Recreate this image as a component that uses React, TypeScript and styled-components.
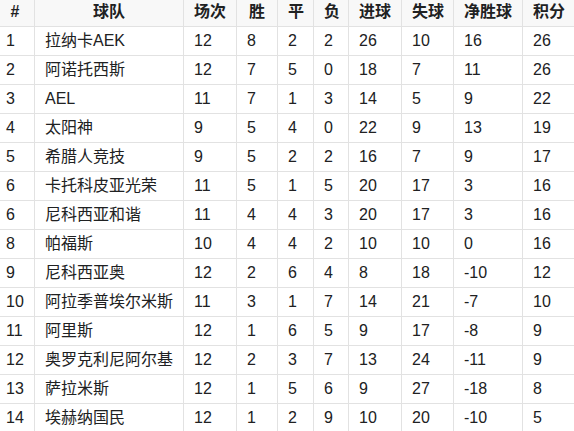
import styled, { createGlobalStyle } from 'styled-components';

const GlobalStyle = createGlobalStyle`
    body {
        margin: 0;
        background: #ffffff;
        font-family: 'Liberation Sans', Arial, 'Noto Sans CJK SC', sans-serif;
        color: #202122;
        overflow: hidden;
    }
`;

const Table = styled.table`
    width: 579px;
    margin: -3px 0 0 -5px;
    table-layout: fixed;
    border-collapse: collapse;
    font-size: 16px;
    line-height: 18px;
`;

const Col = styled.col<{ $w: number }>`
    width: ${(p) => p.$w}px;
`;

const HeadCell = styled.th`
    padding: 5px 10px;
    background: #f8f8f8;
    border: 1px solid #e2e2e2;
    font-weight: bold;
    text-align: center;
    white-space: nowrap;
`;

const Cell = styled.td`
    padding: 5px 10px;
    border: 1px solid #e2e2e2;
    text-align: left;
    white-space: nowrap;
`;

const widths = [39, 149, 53, 41, 36, 35, 53, 52, 69, 52];
const headers = ['#', '球队', '场次', '胜', '平', '负', '进球', '失球', '净胜球', '积分'];

const rows: (string | number)[][] = [
    [1, '拉纳卡AEK', 12, 8, 2, 2, 26, 10, 16, 26],
    [2, '阿诺托西斯', 12, 7, 5, 0, 18, 7, 11, 26],
    [3, 'AEL', 11, 7, 1, 3, 14, 5, 9, 22],
    [4, '太阳神', 9, 5, 4, 0, 22, 9, 13, 19],
    [5, '希腊人竞技', 9, 5, 2, 2, 16, 7, 9, 17],
    [6, '卡托科皮亚光荣', 11, 5, 1, 5, 20, 17, 3, 16],
    [6, '尼科西亚和谐', 11, 4, 4, 3, 20, 17, 3, 16],
    [8, '帕福斯', 10, 4, 4, 2, 10, 10, 0, 16],
    [9, '尼科西亚奥', 12, 2, 6, 4, 8, 18, -10, 12],
    [10, '阿拉季普埃尔米斯', 11, 3, 1, 7, 14, 21, -7, 10],
    [11, '阿里斯', 12, 1, 6, 5, 9, 17, -8, 9],
    [12, '奥罗克利尼阿尔基', 12, 2, 3, 7, 13, 24, -11, 9],
    [13, '萨拉米斯', 12, 1, 5, 6, 9, 27, -18, 8],
    [14, '埃赫纳国民', 12, 1, 2, 9, 10, 20, -10, 5],
];

const App = () => (
    <>
        <GlobalStyle />
        <Table>
            <colgroup>
                {widths.map((w, i) => (
                    <Col $w={w} key={i} />
                ))}
            </colgroup>
            <thead>
                <tr>
                    {headers.map((h) => (
                        <HeadCell key={h}>{h}</HeadCell>
                    ))}
                </tr>
            </thead>
            <tbody>
                {rows.map((row, r) => (
                    <tr key={r}>
                        {row.map((v, c) => (
                            <Cell key={c}>{v}</Cell>
                        ))}
                    </tr>
                ))}
            </tbody>
        </Table>
    </>
);

export default App;
